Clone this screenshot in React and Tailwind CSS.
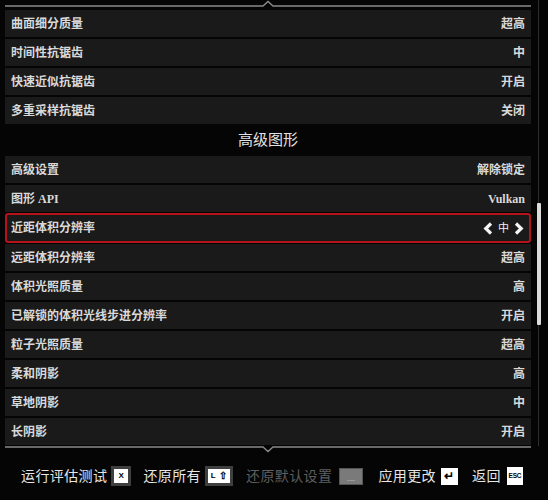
import React from 'react';

const FONT = { fontFamily: '"Liberation Serif", "Noto Sans CJK SC", serif' };

const topRows = [
  ['曲面细分质量', '超高'],
  ['时间性抗锯齿', '中'],
  ['快速近似抗锯齿', '开启'],
  ['多重采样抗锯齿', '关闭'],
];

const advancedRows = [
  ['高级设置', '解除锁定'],
  ['图形 API', 'Vulkan'],
  ['近距体积分辨率', '中', true],
  ['远距体积分辨率', '超高'],
  ['体积光照质量', '高'],
  ['已解锁的体积光线步进分辨率', '开启'],
  ['粒子光照质量', '超高'],
  ['柔和阴影', '高'],
  ['草地阴影', '中'],
  ['长阴影', '开启'],
];

const Chevron = ({ dir }) => (
  <svg width="10" height="13" viewBox="0 0 10 13" className="shrink-0">
    <path
      d={dir === 'left' ? 'M8 1.5 L2.8 6.5 L8 11.5' : 'M2 1.5 L7.2 6.5 L2 11.5'}
      fill="none"
      stroke="#f4f4f4"
      strokeWidth="3.2"
      strokeLinejoin="miter"
    />
  </svg>
);

const SettingRow = ({ label, value, active }) => (
  <div
    className={
      'flex items-center justify-between bg-[#1a1a1a] text-[12px] font-semibold text-[#d9d9d9] ' +
      (active ? 'border-2 border-[#b5121b] rounded-[3px] h-[30px] -my-[1px] px-[4px]' : 'h-[27px] px-[6px]')
    }
  >
    <span>{label}</span>
    {active ? (
      <span className="flex items-center gap-[5px] text-[#f0f0f0] pr-px">
        <Chevron dir="left" />
        <span className="font-normal text-[11px]">{value}</span>
        <Chevron dir="right" />
      </span>
    ) : (
      <span>{value}</span>
    )}
  </div>
);

const EdgeLine = ({ up }) => (
  <svg width="526" height="9" viewBox="0 0 526 9" className="block">
    <path
      d={up ? 'M0 6 L258 6 L263 1.5 L268 6 L526 6' : 'M0 2 L258 2 L263 6.5 L268 2 L526 2'}
      fill="none"
      stroke="#8a8a8a"
      strokeWidth="1.4"
    />
  </svg>
);

const KeyBox = ({ children, framed, className = '' }) => (
  <span
    className={
      'flex items-center justify-center bg-white text-black font-bold leading-none ' +
      (framed ? 'border-[3px] border-[#3f3f3f] ' : '') +
      className
    }
    style={{ fontFamily: '"Liberation Sans", sans-serif' }}
  >
    {children}
  </span>
);

const Hint = ({ label, disabled, gap = 'gap-[4px]', children }) => (
  <div className={'flex items-center ' + gap}>
    <span className={disabled ? 'text-[#5e5e5e]' : 'text-[#e6e6e6]'}>{label}</span>
    {children}
  </div>
);

export default function App() {
  return (
    <div className="w-[548px] h-[500px] bg-[#050505] overflow-hidden flex flex-col" style={FONT}>
      <div className="flex">
        <div className="ml-[5px] w-[526px] flex flex-col">
          <EdgeLine up />
          <div className="flex flex-col gap-[2px] pt-[1px]">
            {topRows.map(([l, v]) => (
              <SettingRow key={l} label={l} value={v} />
            ))}
          </div>
          <div className="h-[32px] flex items-center justify-center text-[15px] text-[#e2e2e2]">
            高级图形
          </div>
          <div className="flex flex-col gap-[2px]">
            {advancedRows.map(([l, v, a]) => (
              <SettingRow key={l} label={l} value={v} active={a} />
            ))}
          </div>
          <EdgeLine />
        </div>
        <div className="ml-[5px] w-[5px] h-[446px] flex flex-col items-center">
          <div className="w-px h-[203px] bg-[#2e2e2e]" />
          <div className="w-[4px] h-[122px] bg-[#dcdcdc] rounded-[1px]" />
          <div className="w-px flex-1 bg-[#2e2e2e]" />
        </div>
      </div>
      <div className="flex-1 flex items-center pl-[21px] text-[14px] tracking-[0.4px] pb-[2px]">
        <Hint label="运行评估测试">
          <KeyBox framed className="w-[20px] h-[20px] text-[8px]">X</KeyBox>
        </Hint>
        <Hint label="还原所有" gap="gap-[4px] ml-[12px]">
          <KeyBox framed className="w-[28px] h-[20px] text-[8px] gap-[3px]">
            <span>L</span>
            <span className="text-[10px]">⇧</span>
          </KeyBox>
        </Hint>
        <Hint label="还原默认设置" disabled gap="gap-[7px] ml-[13px]">
          <span className="flex items-end justify-center w-[24px] h-[17px] bg-[#7a7a7a] border border-[#555] pb-[3px]">
            <span className="w-[8px] h-px bg-[#9a9a9a]" />
          </span>
        </Hint>
        <Hint label="应用更改" gap="gap-[5px] ml-[15px]">
          <KeyBox className="w-[17px] h-[17px] text-[12px]">↵</KeyBox>
        </Hint>
        <Hint label="返回" gap="gap-[6px] ml-[14px]">
          <KeyBox className="w-[16px] h-[18px] text-[6.5px] tracking-[-0.3px]">ESC</KeyBox>
        </Hint>
      </div>
    </div>
  );
}
